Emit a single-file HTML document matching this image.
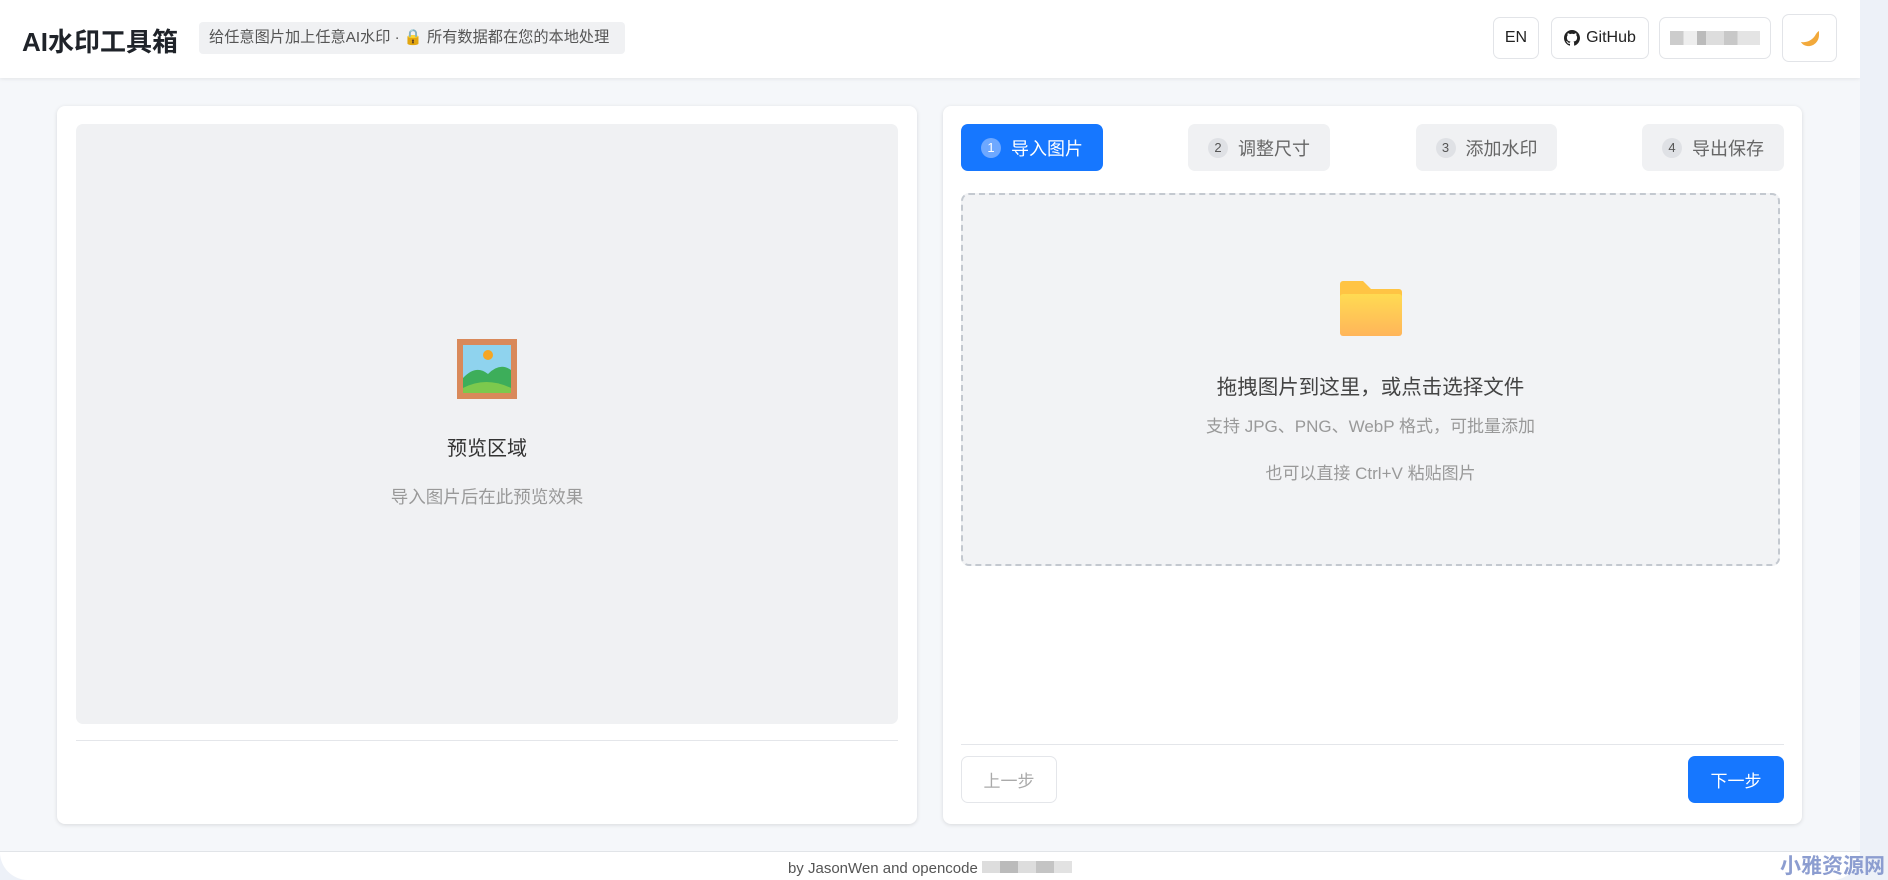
<!DOCTYPE html>
<html><head><meta charset="utf-8"><style>
*{box-sizing:border-box;margin:0;padding:0}
body{width:1888px;height:880px;background:#edf1f8;font-family:"Liberation Sans","Noto Sans CJK SC",sans-serif;position:relative;overflow:hidden}
.page{position:absolute;left:0;top:0;width:1860px;height:880px;background:#f5f7fa;border-radius:0 0 28px 28px;overflow:hidden}
.hdr{position:absolute;left:0;top:0;width:1860px;height:78px;background:#fff;box-shadow:0 1px 4px rgba(0,0,0,.08)}
.title{position:absolute;left:22px;top:22px;font-size:26px;font-weight:bold;color:#1f2329}
.badge{position:absolute;left:199px;top:22px;width:426px;height:32px;background:#f0f1f3;border-radius:4px;font-size:15.2px;color:#555;line-height:32px;padding-left:10px;white-space:nowrap}
.hb{position:absolute;top:17px;height:42px;border:1px solid #e2e4e8;border-radius:7px;background:#fff;font-size:16px;color:#222;display:flex;align-items:center;justify-content:center}
.card{position:absolute;top:106px;height:718px;background:#fff;border-radius:8px;box-shadow:0 1px 4px rgba(0,0,0,.12)}
.step{position:absolute;top:124px;height:47px;border-radius:7px;background:#f0f1f3;color:#666;font-size:18px;display:flex;align-items:center;justify-content:center;gap:10px}
.step i{font-style:normal;width:20px;height:20px;border-radius:50%;background:#dfe1e5;font-size:13px;display:flex;align-items:center;justify-content:center;color:#555}
.t{position:absolute;left:0;width:100%;text-align:center}
</style></head><body>
<div class="page">
<div class="hdr">
<div class="title">AI水印工具箱</div>
<div class="badge">给任意图片加上任意AI水印 · 🔒 所有数据都在您的本地处理</div>
<div class="hb" style="left:1493px;width:46px">EN</div>
<div class="hb" style="left:1551px;width:98px;gap:6px"><svg width="16" height="16" viewBox="0 0 16 16"><path fill="#222" d="M8 0C3.6 0 0 3.6 0 8c0 3.5 2.3 6.5 5.5 7.6.4.1.5-.2.5-.4v-1.4c-2.2.5-2.7-1-2.7-1-.4-.9-.9-1.2-.9-1.2-.7-.5.1-.5.1-.5.8.1 1.2.8 1.2.8.7 1.2 1.9.9 2.3.7.1-.5.3-.9.5-1.1-1.8-.2-3.6-.9-3.6-4 0-.9.3-1.6.8-2.1-.1-.2-.4-1 .1-2.1 0 0 .7-.2 2.2.8.6-.2 1.3-.3 2-.3s1.4.1 2 .3c1.5-1 2.2-.8 2.2-.8.4 1.1.2 1.9.1 2.1.5.6.8 1.3.8 2.1 0 3.1-1.9 3.8-3.6 4 .3.3.6.8.6 1.5v2.2c0 .2.1.5.6.4C13.7 14.5 16 11.5 16 8c0-4.4-3.6-8-8-8z"/></svg>GitHub</div>
<div class="hb" style="left:1659px;width:112px"><div style="width:90px;height:14px;background:linear-gradient(90deg,#ccc 0 15%,#eee 15% 30%,#bbb 30% 40%,#ddd 40% 60%,#c8c8c8 60% 75%,#e4e4e4 75%)"></div></div>
<div class="hb" style="left:1782px;top:14px;width:55px;height:48px"><svg width="24" height="24" viewBox="0 0 24 24"><path fill="#f2a93b" d="M21 9 C21 16 15 21 9 20 C6 19.5 4 18 3 16 C9 17 15 14 18 8 C19 6.5 20 5.5 21 5z"/></svg></div>
</div>

<div class="card" style="left:57px;width:860px">
<div style="position:absolute;left:19px;top:18px;width:822px;height:600px;background:#f0f1f3;border-radius:7px">
<svg style="position:absolute;left:380px;top:214px" width="62" height="62" viewBox="0 0 62 62"><rect x="1" y="1" width="60" height="60" fill="#d9895a"/><rect x="7" y="7" width="48" height="48" fill="#8fd3ee"/><circle cx="32" cy="17" r="5" fill="#f5a623"/><path d="M7 40 Q20 26 32 36 Q44 24 55 32 V55 H7z" fill="#3dae5a"/><path d="M7 50 Q30 38 55 50 V55 H7z" fill="#7cc94d"/></svg>
<div class="t" style="top:308px;font-size:20px;color:#333">预览区域</div>
<div class="t" style="top:360px;font-size:17.5px;color:#999">导入图片后在此预览效果</div>
</div>
<div style="position:absolute;left:19px;top:634px;width:822px;height:1px;background:#e4e6ea"></div>
</div>

<div class="card" style="left:943px;width:859px">
</div>
<div class="step" style="left:961px;width:142px;background:#1677ff;color:#fff"><i style="background:#6ea8ff;color:#fff">1</i>导入图片</div>
<div class="step" style="left:1188px;width:142px"><i>2</i>调整尺寸</div>
<div class="step" style="left:1416px;width:141px"><i>3</i>添加水印</div>
<div class="step" style="left:1642px;width:142px"><i>4</i>导出保存</div>
<div style="position:absolute;left:961px;top:193px;width:819px;height:373px;background:#f2f3f5;border:2px dashed #c4c9d0;border-radius:8px">
<svg style="position:absolute;left:377px;top:84px" width="62" height="58" viewBox="0 0 62 58"><defs><linearGradient id="g" x1="0" y1="0" x2="0" y2="1"><stop offset="0" stop-color="#ffdb52"/><stop offset="1" stop-color="#ffb55a"/></linearGradient></defs><path d="M3 2h20l8 8h28a3 3 0 0 1 3 3v40a3 3 0 0 1-3 3H3a3 3 0 0 1-3-3V5a3 3 0 0 1 3-3z" fill="#ffc444"/><rect x="0" y="15" width="62" height="42" rx="3" fill="url(#g)"/></svg>
<div class="t" style="top:175px;font-size:20.5px;color:#444">拖拽图片到这里，或点击选择文件</div>
<div class="t" style="top:217px;font-size:17px;color:#999">支持 JPG、PNG、WebP 格式，可批量添加</div>
<div class="t" style="top:264px;font-size:17px;color:#999">也可以直接 Ctrl+V 粘贴图片</div>
</div>
<div style="position:absolute;left:961px;top:744px;width:823px;height:1px;background:#e4e6ea"></div>
<div style="position:absolute;left:961px;top:756px;width:96px;height:47px;border:1px solid #e4e6ea;border-radius:7px;color:#aaa;font-size:17px;display:flex;align-items:center;justify-content:center">上一步</div>
<div style="position:absolute;left:1688px;top:756px;width:96px;height:47px;background:#1677ff;border-radius:7px;color:#fff;font-size:17px;display:flex;align-items:center;justify-content:center">下一步</div>

<div style="position:absolute;left:0;top:851px;width:1860px;height:29px;background:#fff;border-top:1px solid #e1e4e8"></div>
<div style="position:absolute;left:0;top:860px;width:1860px;text-align:center;font-size:15px;color:#555">by JasonWen and opencode <span style="display:inline-block;width:90px;height:12px;background:linear-gradient(90deg,#ddd 0 20%,#bbb 20% 40%,#ddd 40% 60%,#c4c4c4 60% 80%,#e2e2e2 80%)"></span></div>
</div>
<div style="position:absolute;left:1780px;top:850px;font-size:21px;font-weight:bold;color:#8c9dd0;font-family:'Noto Sans CJK SC',sans-serif">小雅资源网</div>
</body></html>
